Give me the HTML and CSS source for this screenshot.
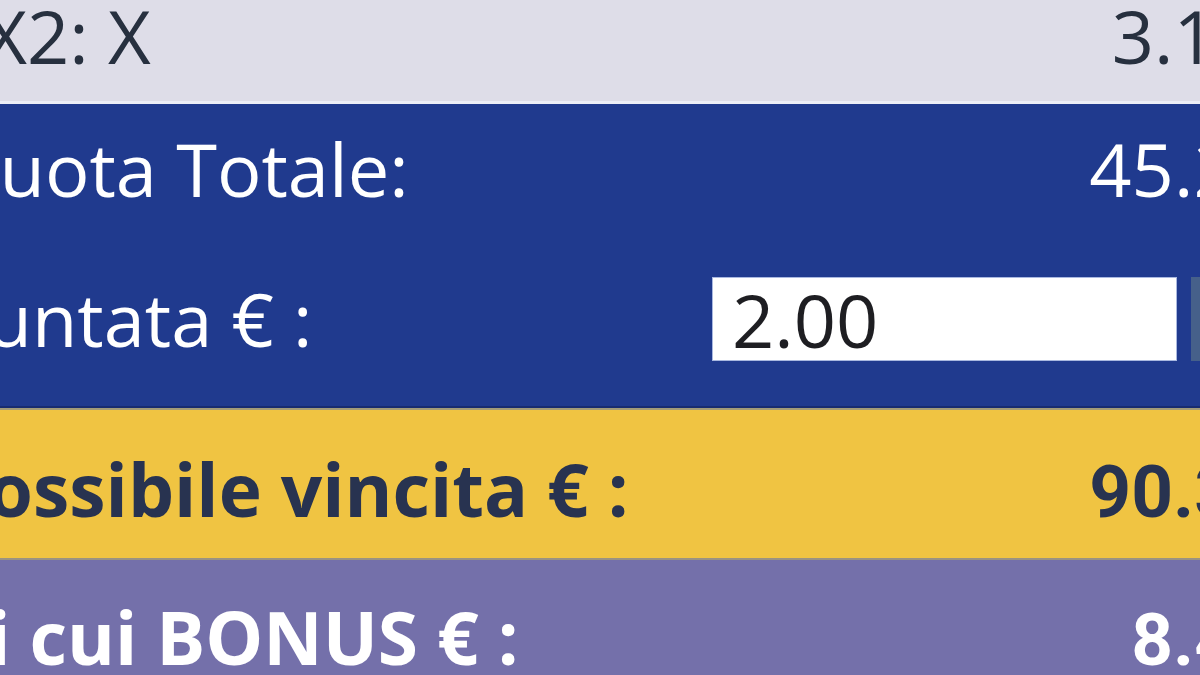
FILE: index.html
```html
<!DOCTYPE html>
<html lang="it">
<head>
    <meta charset="UTF-8">
    <title>Schedina</title>
    <link rel="stylesheet" href="styles.css">
</head>
<body>
<div class="slip">
    <div class="row row-event">
        <span class="label">1X2: X</span>
        <span class="value">3.10</span>
    </div>
    <div class="summary">
        <div class="row row-total">
            <span class="label">Quota Totale:</span>
            <span class="value">45.21</span>
        </div>
        <div class="row row-stake">
            <span class="label">Puntata € :</span>
            <input class="stake-input" type="text" value="2.00">
            <span class="stake-btn"></span>
        </div>
    </div>
    <div class="row row-win">
        <span class="label">Possibile vincita € :</span>
        <span class="value">90.32</span>
    </div>
    <div class="row row-bonus">
        <span class="label">di cui BONUS € :</span>
        <span class="value">8.42</span>
    </div>
</div>
</body>
</html>
```

FILE: styles.css
```css
html, body {
    margin: 0;
    padding: 0;
    overflow: hidden;
    background-color: #7470aa;
}
.slip {
    width: 1400px;
    margin-top: -44px;
    margin-left: -58px; /* widget is cropped on the left */
    font-family: "Open Sans", "Noto Sans", sans-serif;
    font-size: 74px;
    line-height: 1;
}
.row {
    display: flex;
    align-items: baseline;
    padding-right: 64px;
}
.label {
    flex: 1;
    white-space: nowrap;
}
.value {
    white-space: nowrap;
}
.row-event {
    background-color: #dedde8;
    color: #27303f;
    padding-top: 43px;
    padding-bottom: 28px;
    padding-right: 84px;
    border-bottom: 3px solid #eceef7;
}
.summary {
    background-color: #203a8e;
    color: #ffffff;
    padding: 28px 0 45px;
    border-bottom: 2px solid #182c70;
}
.row-total {
    margin-bottom: 71px;
}
.row-stake {
    align-items: center;
    height: 84px;
}
.stake-input {
    box-sizing: border-box;
    width: 465px;
    height: 84px;
    margin: 0;
    padding: 0 0 0 19px;
    border: 1px solid #a9b8e0;
    background-color: #ffffff;
    color: #1e1e22;
    font-family: "Open Sans", "Noto Sans", sans-serif;
    font-size: 74px;
    line-height: 1;
    outline: none;
}
.stake-btn {
    width: 87px;
    height: 84px;
    margin-left: 14px;
    background-color: #46608a;
}
.row-win, .row-bonus {
    font-weight: 700;
    font-size: 73px;
}
.row-win .value, .row-bonus .value {
    font-family: Roboto, "Liberation Sans", sans-serif;
}
.row-win {
    background-color: #f0c442;
    color: #283350;
    border-top: 2px solid #a39b78;
    padding-top: 42px;
    padding-bottom: 29px;
}
.row-bonus {
    background-color: #7470aa;
    color: #ffffff;
    border-top: 2px solid #9a9382;
    padding-top: 40px;
    padding-bottom: 40px;
}
```
